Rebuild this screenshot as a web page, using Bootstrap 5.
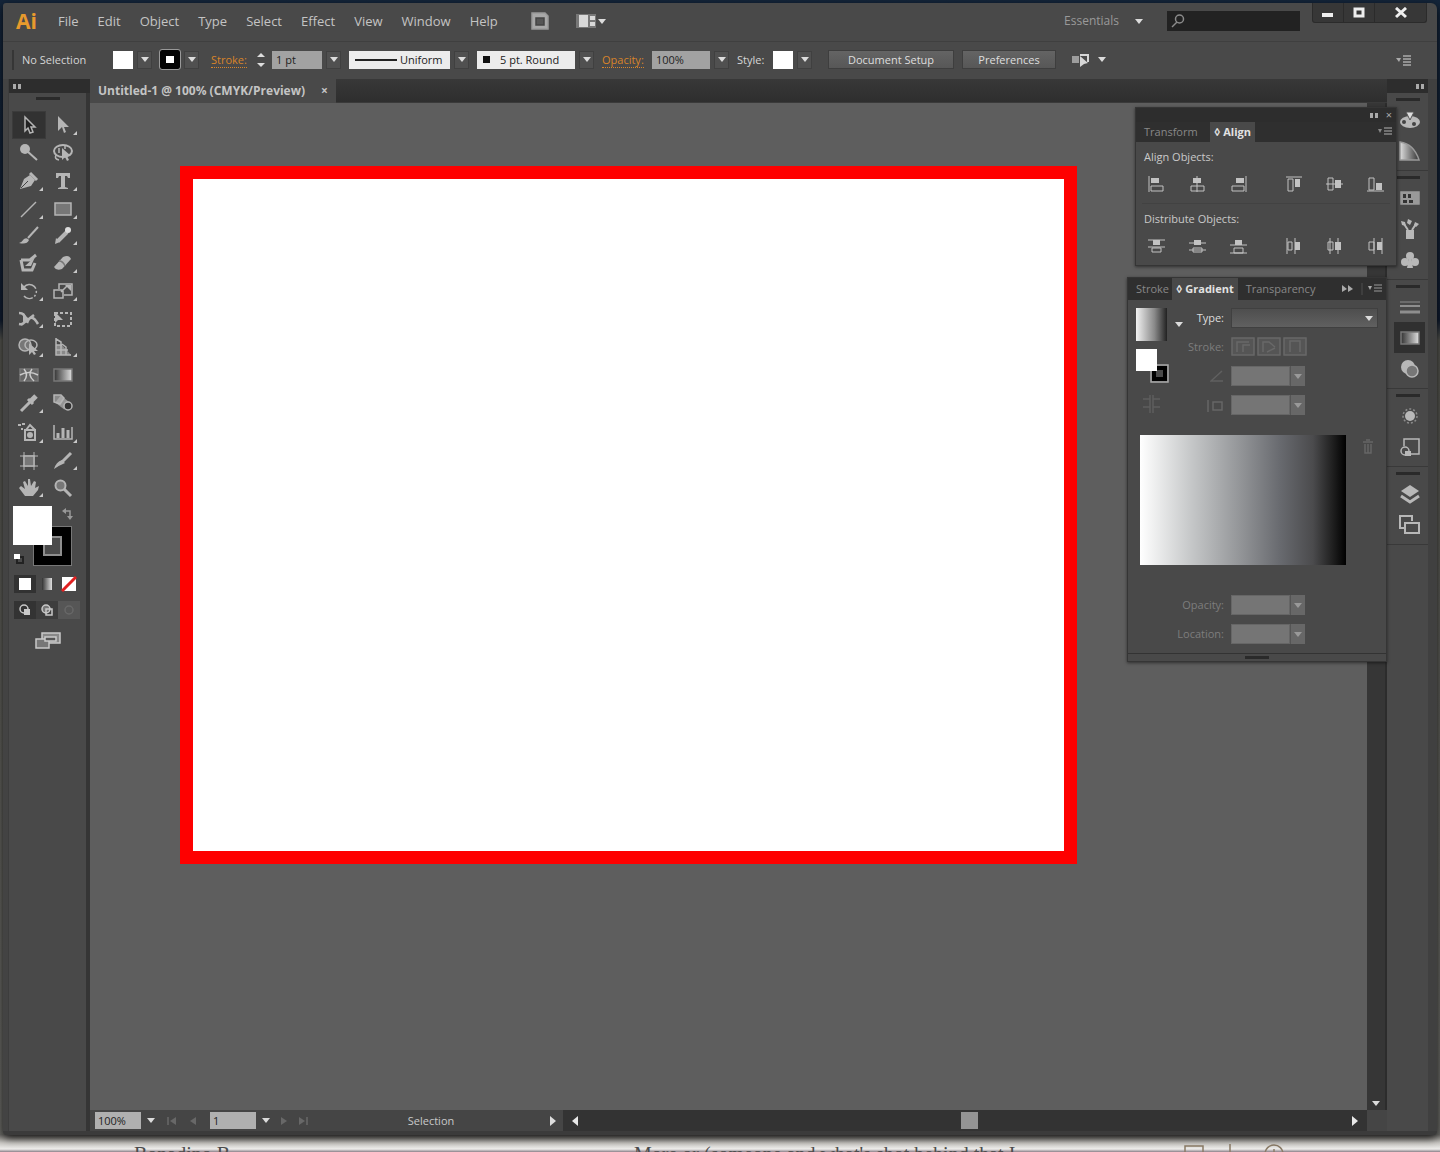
<!DOCTYPE html>
<html lang="en">
<head>
<meta charset="utf-8">
<meta name="viewport" content="width=device-width, initial-scale=1">
<title>Untitled-1 @ 100% (CMYK/Preview)</title>
<link rel="stylesheet" href="https://cdn.jsdelivr.net/npm/bootstrap@5.3.0/dist/css/bootstrap.min.css">
<style>
:root{--face:#494949;--dark:#313131;--line:#3a3a3a;--ink:#c9c9c9;--orange:#d8842a}
body{font-family:"Open Sans","Noto Sans",sans-serif;font-size:11px;line-height:14px;color:var(--ink);background:linear-gradient(#14253a,#101c30 320px,#55554f 340px,#6a6a66);overflow:hidden}
button,input,select{font:inherit;color:inherit;border:0;border-radius:0;padding:0;background:none;display:block}
select{appearance:none}
svg{display:block;fill:none;stroke:currentColor;stroke-width:1.5}
svg .s{fill:currentColor;stroke:none}
a{color:inherit;text-decoration:none}
.shell{height:100vh;padding:3px 3px 0}
.app{background:var(--face);border-radius:3px 6px 6px 6px;box-shadow:0 3px 8px rgba(0,0,0,.8);z-index:1}
.menubar{height:39px;border-bottom:1px solid #3f3f3f;font-size:13px;line-height:18px;padding:0 0 2px 13px;color:#c4c4c4}
.logo{font:bold 21px/24px "Open Sans",sans-serif;color:#e79a2d;width:42px}
.menus{gap:19px}
.essentials{font-size:12px;color:#999}
.finder{background:#222;width:133px;height:20px;padding-left:3px}
.finder input{width:108px;outline:0}
.winbtns{height:20px;background:#373737;border:1px solid #2b2b2b;border-top:0;border-radius:0 0 3px 3px;color:#eee;margin-right:10px}
.winbtns button{width:31px;display:grid;place-items:center;border-right:1px solid #2b2b2b}
.winbtns button:last-child{width:51px;border:0}
.heavy{stroke-width:3}
.ctrl{height:37px;padding:0 0 2px 9px;color:#d6d6d6}
.ctrl>*{flex:none}
.grip-v{width:2px;height:20px;background:#363636}
.fld{background:#a2a2a2;color:#222;height:18px;padding:0 4px;outline:0}
.caret-btn{width:15px;height:18px;display:grid;place-items:center;border:1px solid #404040;background:#505050}
.caret-btn::after,.tri::after{content:"";border:4px solid transparent;border-top:5px solid #dcdcdc;border-bottom:0}
.pick{background:#ececec;color:#222;height:18px}
.olink{color:var(--orange);border-bottom:1px dotted var(--orange);line-height:12px}
.sw{background:#fff;width:20px;height:18px}
.sw-stroke{width:20px;height:19px;border:6px solid #050505;outline:1px solid #999;background:#fff;border-radius:2px}
.pushb{height:19px;background:linear-gradient(#646464,#575757);border:1px solid #3e3e3e;color:#dedede}
.edge-l{width:5px;background:#434343}
.tools{width:82px;border-left:1px solid #3d3d3d;border-right:4px solid #353535;background:var(--face)}
.cap{height:14px;background:#2d2d2d;color:#aaa}
.tools .cap{width:82px}
.ticks{width:8px;height:5px;border:solid #aaa;border-width:0 3px}
.grip-h{width:24px;height:3px;background:#2a2a2a}
.griprow{height:18px;padding-top:4px}
.toolgrid{display:grid;grid-template-columns:34px 34px;grid-template-rows:28px 28px 28px 28px 26px 28px 28px 27px 29px 28px 28px 30px 27px 27px;padding-left:3px;color:#b5b5b5}
.toolgrid button{display:grid;place-items:center;position:relative}
.toolgrid .more::after{content:"";position:absolute;right:3px;bottom:4px;border:2px solid #c8c8c8;border-left-color:transparent;border-top-color:transparent}
.toolgrid .on{background:#323232;box-shadow:inset 0 0 0 1px #3b3b3b}
.paint{height:74px;position:relative}
.paint>*{position:absolute}
.fillbox{left:4px;top:5px;width:39px;height:39px;background:#fff;z-index:1}
.strokebox{left:25px;top:26px;width:37px;height:38px;border:9px solid #000;outline:1px solid #777;background:#4b4b4b;box-shadow:inset 0 0 0 2px #8e8e8e}
.swap{left:52px;top:6px}.deflt{left:4px;top:51px}
.modes{padding-left:5px}
.modes button{width:22px;height:18px;display:grid;place-items:center}
.tabs{height:24px;background:linear-gradient(#383838,#2e2e2e);border-bottom:1px solid #3a3a3a}
.doctab{height:24px;background:var(--face);padding:0 8px;font-size:12px;font-weight:700;line-height:16px;color:#c4c4c4}
.stage{background:#5e5e5e;padding:63px 0 0 90px}
.artboard{width:897px;height:698px;border:13px solid #fe0000;background:#fff}
.vscroll{width:20px;background:#363636;border-right:2px solid #2c2c2c}
.status{height:21px;background:#454545;padding-left:5px}
.status .fld{height:17px;background:#b0b0b0;padding:0 3px}
.status .tri{width:11px;display:grid;place-items:center}
.mode-name{width:222px;text-align:center;padding-right:10px}
.hbar{background:#333;height:21px;color:#e8e8e8}
.thumb{width:17px;height:17px;background:#949494}
.dock{width:41px;background:var(--face)}
.dockgrp{padding:5px 0 4px;border-bottom:1px solid #393939;color:#b8b8b8}
.dockgrp .grip-h{margin:0 0 3px 9px}
.dockgrp button{width:31px;height:31px;margin-left:7px;display:grid;place-items:center}
.dockgrp .on{background:#303030}
.edge-r{width:9px;background:#404040}
.base{height:4px;background:#3b3b3b;border-radius:0 0 6px 6px}
.floatp{position:absolute;background:var(--face);border:1px solid #353535;box-shadow:0 1px 3px rgba(0,0,0,.5);z-index:3}
.alignp{top:28px;right:40px;width:262px}
.gradp{top:198px;right:50px;width:260px}
.ptabs{background:#2f2f2f;height:20px;color:#888}
.ptabs .tab-on{background:var(--face);color:#e2e2e2;font-weight:700;height:100%}
.gradp .ptabs{height:22px}
.abtns{padding:0 12px;height:24px;color:#c2c2c2;margin:8px 0 7px}
.abtns svg{stroke-width:1}
.hr-soft{height:1px;background:#424242;margin:0 6px}
.gswatch{width:31px;height:33px;background:linear-gradient(90deg,#f2f2f2,#888 60%,#222)}
.ramp{width:206px;height:130px;background:linear-gradient(90deg,#fff,#c5c7c8 25%,#909295 50%,#686a6f 68%,#4b4b4d 84%,#222 93%,#000)}
.ramprow{padding:11px 0 0 12px}
.stopfields{padding:30px 0 0 8px}
.frow{height:29px}
.frow label{width:88px;text-align:right;margin-right:7px;color:#7d7d7d;line-height:20px}
.dimf{width:59px;height:20px;background:#757575;outline:0;border:1px solid #666}
.dimb{width:15px;height:20px;background:#676767;display:grid;place-items:center;border-left:1px solid #555}
.dimb::after{content:"";border:4px solid transparent;border-top:5px solid #999;border-bottom:0}
.typesel{width:147px;height:20px;background:linear-gradient(#4e4e4e,#606060);border:1px solid #404040}
.pfoot{height:8px;border-top:1px solid #333}
.behind{height:17px;background:linear-gradient(#6d6b68,#c9c7c3 8px,#eeedeb 14px,#8b8088 17px);margin:0 -3px;overflow:hidden;font:20px/20px "Liberation Serif",serif;color:#4c4c4c;padding:9px 0 0 134px}
</style>
<script src="https://cdn.jsdelivr.net/npm/bootstrap@5.3.0/dist/js/bootstrap.bundle.min.js"></script>
</head>
<body>
<div class="shell d-flex flex-column">
<div class="app d-flex flex-column flex-grow-1 position-relative">

<header class="menubar d-flex align-items-center flex-shrink-0">
  <span class="logo">Ai</span>
  <nav class="menus d-flex">
    <a href="#">File</a><a href="#">Edit</a><a href="#">Object</a><a href="#">Type</a><a href="#">Select</a><a href="#">Effect</a><a href="#">View</a><a href="#">Window</a><a href="#">Help</a>
  </nav>
  <button class="ms-4 ps-2" aria-label="Bridge"><svg width="20" height="20"><path d="M2 2h13l3 3v13H2z" fill="#a8a8a8" stroke="#999"/><path d="M6 7h8v7H6z" fill="#555" stroke="#444"/></svg></button>
  <button class="ms-4 d-flex align-items-center tri" aria-label="Arrange documents"><svg width="24" height="18"><path d="M2 2h20v14H2z" fill="#777" stroke="none"/><path d="M5 3h9v12H5zM16 4h5v4h-5zM16 10h5v4h-5z" fill="#d8d8d8" stroke="none"/></svg></button>
  <button class="essentials ms-auto d-flex align-items-center gap-3 tri">Essentials</button>
  <label class="finder d-flex align-items-center ms-4 me-2" aria-label="Search"><svg width="16" height="16" color="#8b8b8b"><circle cx="9.500" cy="6" r="4"/><path d="M7 9l-5 5"/></svg><input type="text" aria-label="Search help"></label>
  <div class="winbtns d-flex align-self-start ms-1">
    <button aria-label="Minimize"><svg width="12" height="12"><path d="M0 6h11v4H0z" class="s"/></svg></button>
    <button aria-label="Maximize"><svg class="heavy" width="12" height="12"><path d="M2 2h8v7H2z"/></svg></button>
    <button aria-label="Close"><svg class="heavy" width="12" height="12"><path d="M1 1l10 9M11 1L1 10"/></svg></button>
  </div>
</header>

<div class="ctrl d-flex align-items-center flex-shrink-0">
  <span class="grip-v"></span>
  <span style="width:95px" class="ps-2">No Selection</span>
  <button class="sw ms-1 me-1" aria-label="Fill"></button><button class="caret-btn" aria-label="Fill options"></button>
  <button class="sw-stroke ms-2 me-1" aria-label="Stroke colour"></button><button class="caret-btn" aria-label="Stroke options"></button>
  <label for="wt" class="ms-2 ps-1" style="width:47px"><span class="olink">Stroke:</span></label>
  <svg width="14" height="20" color="#ddd" class="me-1"><path class="s" d="M3 7l4-4 4 4zM3 13l4 4 4-4z"/></svg>
  <input id="wt" class="fld me-1" style="width:50px" value="1 pt"><button class="caret-btn" aria-label="Weights"></button>
  <label class="d-flex align-items-center pick ms-2" style="width:101px;padding-left:6px"><svg width="42" height="4"><path d="M0 2h42" stroke="#222" stroke-width="2"/></svg><select style="width:50px;margin-left:3px" aria-label="Width profile"><option>Uniform</option></select></label><button class="caret-btn ms-1" aria-label="Profiles"></button>
  <label class="d-flex align-items-center pick ms-2" style="width:98px;padding-left:6px"><svg width="7" height="7"><path d="M0 0h7v7H0z" style="fill:#111;stroke:none"/></svg><select style="width:72px;margin-left:10px" aria-label="Brush"><option>5 pt. Round</option></select></label><button class="caret-btn ms-1" aria-label="Brushes"></button>
  <label for="op" class="ms-2" style="width:50px"><span class="olink">Opacity:</span></label>
  <input id="op" class="fld" style="width:58px" value="100%"><button class="caret-btn ms-1" aria-label="Opacity values"></button>
  <span class="ms-2" style="width:36px">Style:</span>
  <button class="sw" aria-label="Graphic style"></button><button class="caret-btn ms-1" aria-label="Styles"></button>
  <button class="pushb ms-3" style="width:126px">Document Setup</button>
  <button class="pushb ms-2" style="width:94px">Preferences</button>
  <button class="ms-3 d-flex align-items-center gap-2 tri" aria-label="Select similar"><svg width="18" height="18"><path class="s" d="M0 5h7v7H0z" opacity=".6"/><path d="M8 4h8v7" stroke-width="2"/><path class="s" d="M8 5l8 7-4 1-4 3z"/></svg></button>
  <button class="ms-auto me-4" aria-label="Panel menu"><svg width="17" height="12" color="#aaa"><path class="s" d="M0 4h5l-2 4z"/><path d="M7 2h8M7 5h8M7 8h8M7 11h8"/></svg></button>
</div>

<main class="d-flex flex-grow-1 position-relative">
  <div class="edge-l"></div>
  <aside class="tools">
    <div class="cap d-flex align-items-center ps-1"><span class="ticks"></span></div>
    <div class="griprow d-flex justify-content-center"><span class="grip-h"></span></div>
    <div class="toolgrid">
      <button class="on" aria-label="Selection"><svg width="20" height="20"><path d="M6 2v14l3-3 2 5 3-1-2-5h4z" fill="#222"/></svg></button>
      <button class="more" aria-label="Direct selection"><svg width="20" height="20"><path class="s" d="M5 1v15l4-4 2 6 2-1-2-5h5z"/></svg></button>
      <button aria-label="Magic wand"><svg width="20" height="20"><circle class="s" cx="6" cy="6" r="5"/><path d="M8 8l10 9" stroke-width="2"/></svg></button>
      <button aria-label="Lasso"><svg width="22" height="20"><ellipse cx="11" cy="8" rx="9" ry="6" stroke-width="2"/><path d="M4 12q-2 4 3 5M7 5v5M13 2v4" /><path class="s" d="M10 5v12l3-3 2 4 2-1-2-4h4z"/></svg></button>
      <button class="more" aria-label="Pen"><svg width="20" height="20"><path class="s" d="M1 18L5 8l6-4 5 5-4 6z"/><path d="M11 2l7 7" stroke-width="3"/><path d="M2 17l7-7" stroke="#444" stroke-width="1"/></svg></button>
      <button class="more" aria-label="Type"><svg width="20" height="20"><path class="s" d="M3 2h14v5h-2l-1-2h-2v11l3 1v1H5v-1l3-1V5H6L5 7H3z"/></svg></button>
      <button class="more" aria-label="Line"><svg width="20" height="20"><path d="M2 18L17 3"/></svg></button>
      <button class="more" aria-label="Rectangle"><svg width="20" height="20"><path d="M2 4h16v12H2z" fill="#777"/></svg></button>
      <button aria-label="Paintbrush"><svg width="20" height="20"><path d="M19 1L9 12" stroke-width="2"/><path class="s" d="M0 17q3-1 5-4 3-2 5 1-2 5-10 3z"/></svg></button>
      <button class="more" aria-label="Pencil"><svg width="20" height="20"><path d="M5 15l9-9" stroke-width="4"/><path class="s" d="M2 18l1-6 4 4z"/><circle cx="15" cy="4" r="3" style="fill:#ddd;stroke:none"/></svg></button>
      <button aria-label="Blob brush"><svg width="20" height="20"><path d="M2 7h9l6-5M2 7l2 10h9l3-7" stroke-width="3"/><path class="s" d="M6 13l10-9-4 9z"/></svg></button>
      <button class="more" aria-label="Eraser"><svg width="20" height="20"><path class="s" d="M1 14l9-10q6-3 8 2l-9 10q-6 2-8-2z"/><path d="M6 8q4 0 6 5" stroke="#777"/></svg></button>
      <button class="more" aria-label="Rotate"><svg width="20" height="20"><path d="M5 6a7 7 0 1 1 0 9" stroke-dasharray="14 2 2 2 2 2"/><path class="s" d="M2 2v7h7z"/></svg></button>
      <button class="more" aria-label="Scale"><svg width="22" height="20"><path d="M2 9h9v8H2zM7 8V3h13v11h-8M9 11l6-6" /><path class="s" d="M13 4h6v6z"/></svg></button>
      <button class="more" aria-label="Width"><svg width="22" height="20"><path d="M1 4q6 0 6 6t-6 5M3 16L16 6M9 14q4-11 11 1" stroke-width="2.500"/><path class="s" d="M5 4l6 6-6 3z"/></svg></button>
      <button aria-label="Free transform"><svg width="20" height="20"><path d="M2 4h16v13H2z" stroke-dasharray="3 2" stroke-width="2"/><path class="s" d="M2 3v11l3-3h5z"/></svg></button>
      <button class="more" aria-label="Shape builder"><svg width="22" height="20"><circle cx="7" cy="8" r="6" fill="#777"/><ellipse cx="13" cy="8" rx="6" ry="5"/><path class="s" d="M11 6v12l3-3 2 3 2-1-2-3h4z"/></svg></button>
      <button class="more" aria-label="Perspective grid"><svg width="20" height="20"><path d="M3 1v17h15M3 2l5 3v13M9 7l4 3v8M3 8h6M3 13h12" /><path class="s" d="M3 8h6l9 10H3z" opacity=".6"/></svg></button>
      <button aria-label="Mesh"><svg width="22" height="20"><path d="M2 4h18v12H2z" fill="#666" stroke="#777"/><path d="M6 4q5 6 0 12M14 4q-5 6 2 12M2 10q9-5 18 0" stroke="#ccc"/></svg></button>
      <button aria-label="Gradient"><svg width="20" height="20"><defs><linearGradient id="tg"><stop offset="0" stop-color="#333"/><stop offset="1" stop-color="#e0e0e0"/></linearGradient></defs><path d="M1 4h18v12H1z" fill="url(#tg)" stroke="#777"/></svg></button>
      <button class="more" aria-label="Eyedropper"><svg width="20" height="20"><path d="M2 18l9-9" stroke-width="3"/><path d="M9 6l5 5" stroke-width="3"/><path d="M12 8l5-5" stroke-width="5"/></svg></button>
      <button aria-label="Blend"><svg width="22" height="20"><path d="M2 2h7l3 3-4 6-6-2z" fill="#888"/><path d="M6 6l9 7" stroke-width="9" opacity=".7"/><circle cx="16" cy="13" r="4" fill="#333"/></svg></button>
      <button class="more" aria-label="Symbol sprayer"><svg width="22" height="20"><path d="M7 8h10v10H7zM8 8l4-5 5 5" stroke-width="2"/><path d="M0 3h3M4 2h3M3 7h2" stroke-width="2"/><circle class="s" cx="12" cy="13" r="3"/></svg></button>
      <button class="more" aria-label="Column graph"><svg width="22" height="20"><path d="M2 3v14h18V5"/><path d="M6 16v-5M11 16V6M16 16V8" stroke-width="3"/></svg></button>
      <button aria-label="Artboard"><svg width="20" height="20"><path d="M5 1v18M15 1v18M1 5h18M1 15h18" stroke-width="1"/><path d="M5 5h10v10H5z" fill="#777"/></svg></button>
      <button class="more" aria-label="Slice"><svg width="20" height="20"><path class="s" d="M1 18q2-7 8-9l3 3q-5 2-11 6z"/><path d="M9 11l9-9" stroke-width="3"/></svg></button>
      <button class="more" aria-label="Hand"><svg width="20" height="20"><path class="s" d="M6 18L0 10l2-2 4 3-2-7 2-1 3 5V1h2l1 7 3-5 2 1-1 6 4-2-1 4-5 6z"/></svg></button>
      <button aria-label="Zoom"><svg width="20" height="20"><circle cx="7.500" cy="7.500" r="5" stroke-width="2" fill="#777"/><path d="M11 11l7 7" stroke-width="3"/></svg></button>
    </div>
    <div class="paint">
      <button class="fillbox" aria-label="Fill colour"></button>
      <button class="strokebox" aria-label="Stroke paint"></button>
      <button class="swap" aria-label="Swap fill and stroke"><svg width="14" height="14" color="#999"><path d="M4 4h5v6"/><path class="s" d="M1 4l4-3v6zM6 9h6l-3 4z"/></svg></button>
      <button class="deflt" aria-label="Default colours"><svg width="14" height="14"><path d="M4 5h6v6H4z" stroke="#222" stroke-width="2"/><path d="M1 2h6v5H1z" style="fill:#fff;stroke:none"/></svg></button>
    </div>
    <div class="modes d-flex">
      <button aria-label="Color" style="background:#323232"><svg width="14" height="14"><path d="M1 1h12v12H1z" style="fill:#fff;stroke:none"/></svg></button>
      <button aria-label="Gradient paint"><svg width="10" height="14"><path d="M0 1h10v12H0z" fill="url(#tg)" stroke="none"/></svg></button>
      <button aria-label="None"><svg width="16" height="16"><path d="M1 1h14v14H1z" style="fill:#fff;stroke:none"/><path d="M1 15L15 1" stroke="#e02020" stroke-width="3"/></svg></button>
    </div>
    <div class="modes d-flex pt-2">
      <button aria-label="Draw normal" style="background:#333"><svg width="16" height="14"><circle cx="7" cy="6" r="4"/><path class="s" d="M7 6h6v6H7z"/></svg></button>
      <button aria-label="Draw behind" style="background:#3d3d3d"><svg width="16" height="14"><circle cx="7" cy="6" r="4" fill="#777"/><path d="M7 6h6v6H7z"/></svg></button>
      <button aria-label="Draw inside" style="background:#565656"><svg width="16" height="14" color="#686868"><circle cx="8" cy="7" r="4"/></svg></button>
    </div>
    <button class="mx-auto mt-2 pt-1" aria-label="Screen mode"><svg width="28" height="20"><path d="M8 2h18v10H8z" fill="#888"/><path d="M2 8h13v9H2z" fill="#777"/><path d="M11 6h11v4H11z" fill="#555"/></svg></button>
  </aside>

  <section class="d-flex flex-column flex-grow-1">
    <div class="tabs d-flex"><div class="doctab d-flex align-items-center gap-3">Untitled-1 @ 100% (CMYK/Preview)<button aria-label="Close document">×</button></div></div>
    <div class="d-flex flex-grow-1">
      <div class="stage flex-grow-1"><div class="artboard"></div></div>
      <div class="vscroll d-flex flex-column justify-content-end align-items-center tri pb-1"></div>
    </div>
    <div class="status d-flex align-items-center">
      <input class="fld" style="width:46px" value="100%" aria-label="Zoom level"><button class="tri ms-1" aria-label="Zoom values"></button>
      <svg width="46" height="10" color="#686868" class="ms-2"><path d="M4 1v8"/><path class="s" d="M12 1v8L6 5zM32 1v8l-6-4z"/></svg>
      <input class="fld" style="width:46px" value="1" aria-label="Artboard number"><button class="tri ms-1" aria-label="Artboards"></button>
      <svg width="46" height="10" color="#686868" class="ms-2"><path d="M28 1v8"/><path class="s" d="M2 1v8l6-4zM20 1v8l6-4z"/></svg>
      <span class="mode-name">Selection</span>
      <svg width="12" height="10" class="me-1" color="#ddd"><path class="s" d="M3 0v10l6-5z"/></svg>
      <div class="hbar d-flex align-items-center flex-grow-1 px-2">
        <svg width="7" height="10"><path class="s" d="M7 0v10L1 5z"/></svg>
        <span class="flex-grow-1"></span><span class="thumb"></span><span style="width:374px"></span>
        <svg width="7" height="10"><path class="s" d="M0 0v10l6-5z"/></svg>
      </div>
      <span style="width:20px"></span>
    </div>
  </section>

  <aside class="dock">
    <div class="cap d-flex align-items-center justify-content-end pe-1"><span class="ticks"></span></div>
    <div class="dockgrp"><div class="grip-h"></div>
      <button aria-label="Color"><svg width="24" height="20"><ellipse cx="12" cy="12" rx="10" ry="6" class="s"/><circle cx="6" cy="12" r="2" fill="#444" stroke="none"/><circle cx="16" cy="14" r="2" fill="#444" stroke="none"/><path d="M8 2l4 8 4-8z" fill="#ddd" stroke="#555" stroke-width="1"/></svg></button>
      <button aria-label="Color guide"><svg width="22" height="20"><defs><linearGradient id="cg"><stop offset="0" stop-color="#ddd"/><stop offset="1" stop-color="#333"/></linearGradient></defs><path d="M1 1q14 2 19 18H1z" fill="url(#cg)" stroke="#999"/></svg></button></div>
    <div class="dockgrp"><div class="grip-h"></div>
      <button aria-label="Swatches"><svg width="20" height="16"><path d="M1 2h18v12H1z" fill="#999" stroke="#999"/><path d="M3 4h3v4H3zM8 4h3v4H8zM3 10h4v3H3zM9 10h4v3H9z" style="fill:#333;stroke:none"/></svg></button>
      <button aria-label="Brushes"><svg width="20" height="22"><path class="s" d="M6 12h8v9H6z"/><path d="M8 12L4 6M12 12l4-6" stroke-width="2"/><path class="s" d="M1 3l4 1 1 4-4-1zM8 1l4 2-2 4-3-2zM15 4l4 2-3 3-2-2z"/></svg></button>
      <button aria-label="Symbols"><svg width="20" height="20"><circle class="s" cx="10" cy="6" r="4"/><circle class="s" cx="5" cy="12" r="4"/><circle class="s" cx="15" cy="12" r="4"/><path class="s" d="M9 8h2l2 10H7z"/></svg></button></div>
    <div class="dockgrp"><div class="grip-h"></div>
      <button aria-label="Stroke"><svg width="20" height="16" color="#8e8e8e"><path d="M0 3h20" stroke-width="1"/><path d="M0 7h20" stroke-width="2"/><path d="M0 13h20" stroke-width="3"/></svg></button>
      <button class="on" aria-label="Gradient panel"><svg width="20" height="14"><path d="M1 1h18v12H1z" fill="url(#tg)" stroke="#777"/></svg></button>
      <button aria-label="Transparency"><svg width="22" height="22"><circle class="s" cx="9" cy="9" r="7"/><circle cx="13" cy="13" r="6" fill="#777"/></svg></button></div>
    <div class="dockgrp"><div class="grip-h"></div>
      <button aria-label="Appearance"><svg width="20" height="20"><circle cx="10" cy="10" r="7" stroke-dasharray="2 2" opacity=".6"/><circle class="s" cx="10" cy="10" r="5"/></svg></button>
      <button aria-label="Graphic styles"><svg width="22" height="20"><path d="M5 9V2h15v15h-8"/><circle cx="6" cy="14" r="4"/><path class="s" d="M6 14h6v5H6z"/></svg></button></div>
    <div class="dockgrp"><div class="grip-h"></div>
      <button aria-label="Layers"><svg width="20" height="20"><path class="s" d="M10 1l9 6-9 6-9-6z"/><path d="M1 12l9 6 9-6" stroke-width="3"/></svg></button>
      <button aria-label="Artboards"><svg width="22" height="22"><path d="M5 14H1V2h12v5M6 9h14v10H6z" stroke-width="2"/></svg></button></div>
  </aside>
  <div class="edge-r"></div>

  <section class="floatp alignp">
    <div class="cap d-flex align-items-center justify-content-end gap-2 pe-1"><span class="ticks"></span><span>×</span></div>
    <div class="ptabs d-flex align-items-center"><a href="#" class="px-2" style="width:74px">Transform</a><a href="#" class="tab-on px-1 d-flex align-items-center">◊ Align</a>
      <svg width="14" height="10" class="ms-auto me-1" color="#888"><path class="s" d="M0 2h4l-2 4z"/><path d="M6 1h8M6 4h8M6 7h8"/></svg></div>
    <div class="px-2 pt-2">Align Objects:</div>
    <div class="abtns d-flex align-items-center">
      <div class="d-flex gap-4"><button aria-label="Align left"><svg width="17" height="18"><path d="M1 1v16M3 11h12v5H3z"/><path class="s" d="M3 3h8v5H3z"/></svg></button>
      <button aria-label="Align centre"><svg width="17" height="18"><path d="M8 1v16M2 11h13v5H2z"/><path class="s" d="M4 3h8v5H4z"/></svg></button>
      <button aria-label="Align right"><svg width="17" height="18"><path d="M16 1v16M2 11h12v5H2z"/><path class="s" d="M6 3h8v5H6z"/></svg></button></div>
      <div class="d-flex gap-4 ms-auto"><button aria-label="Align top"><svg width="17" height="18"><path d="M1 2h16M3 4h5v12H3z"/><path class="s" d="M10 4h5v8h-5z"/></svg></button>
      <button aria-label="Align middle"><svg width="17" height="18"><path d="M0 9h17M2 3h5v12H2z"/><path class="s" d="M9 5h6v8H9z"/></svg></button>
      <button aria-label="Align bottom"><svg width="17" height="18"><path d="M0 16h17M2 3h5v12H2z"/><path class="s" d="M9 8h6v7H9z"/></svg></button></div>
    </div>
    <div class="hr-soft"></div>
    <div class="px-2 pt-2">Distribute Objects:</div>
    <div class="abtns d-flex align-items-center">
      <div class="d-flex gap-4"><button aria-label="Distribute top"><svg width="17" height="18"><path d="M0 3h17M0 10h17M4 11h9v4H4z"/><path class="s" d="M5 3h7v5H5z"/></svg></button>
      <button aria-label="Distribute vertical centre"><svg width="17" height="18"><path d="M0 6h17M0 13h17M4 11h9v4H4z"/><path class="s" d="M5 3h7v5H5z"/></svg></button>
      <button aria-label="Distribute bottom"><svg width="17" height="18"><path d="M0 8h17M0 16h17M4 11h9v5H4z"/><path class="s" d="M5 3h7v5H5z"/></svg></button></div>
      <div class="d-flex gap-4 ms-auto"><button aria-label="Distribute left"><svg width="17" height="18"><path d="M2 1v16M10 1v16M3 5h4v8H3z"/><path class="s" d="M10 5h5v8h-5z"/></svg></button>
      <button aria-label="Distribute horizontal centre"><svg width="17" height="18"><path d="M4 1v16M12 1v16M2 5h5v8H2z"/><path class="s" d="M9 5h6v8H9z"/></svg></button>
      <button aria-label="Distribute right"><svg width="17" height="18"><path d="M7 1v16M15 1v16M2 5h5v8H2z"/><path class="s" d="M10 5h5v8h-5z"/></svg></button></div>
    </div>
  </section>

  <section class="floatp gradp">
    <div class="ptabs d-flex align-items-center"><a href="#" class="ps-2" style="width:44px">Stroke</a><a href="#" class="tab-on px-1 d-flex align-items-center">◊ Gradient</a><a href="#" class="px-2">Transparency</a>
      <svg width="48" height="12" class="ms-auto" color="#aaa"><path class="s" d="M4 2v7l5-3zM10 2v7l5-3z"/><path d="M24 0v12" stroke="#444"/><path class="s" d="M30 3h4l-2 4z" /><path d="M36 2h8M36 5h8M36 8h8" stroke="#777"/></svg></div>
    <div class="d-flex position-relative pt-2 ps-2">
      <div class="position-absolute">
        <div class="d-flex align-items-center gap-2 tri"><div class="gswatch"></div></div>
        <svg width="36" height="36" class="mt-2"><path d="M15 16h17v17H15z" stroke="#aaa"/><path d="M18 19h11v11H18z" stroke="#000" stroke-width="4"/><path d="M0 0h21v22H0z" style="fill:#fff;stroke:none"/></svg>
        <svg width="24" height="22" color="#5e5e5e" class="mt-2 ms-1"><path d="M10 2v18M13 2v18M3 6h7M13 6h7M3 14h7M13 14h7"/></svg>
      </div>
      <div>
        <div class="frow d-flex"><label for="gt" style="color:#ddd">Type:</label><div class="typesel d-flex align-items-center justify-content-end tri pe-1"><select id="gt" class="flex-grow-1" style="height:18px"><option></option></select></div></div>
        <div class="frow d-flex"><label>Stroke:</label><svg width="76" height="20" color="#686868"><path d="M1 1h22v17H1zM27 1h22v17H27zM53 1h22v17H53z" fill="#555"/><path d="M6 15V5h12M12 15V8h7M32 15V5h6l6 5M36 15l8-4M59 15V4h10v11"/></svg></div>
        <div class="frow d-flex"><label for="ga" aria-label="Angle"><svg width="14" height="12" class="ms-auto mt-1" color="#606060"><path d="M12 1L1 11h12"/></svg></label><input id="ga" class="dimf"><button class="dimb" aria-label="Angles"></button></div>
        <div class="frow d-flex"><label for="gr" aria-label="Aspect ratio"><svg width="18" height="14" class="ms-auto mt-1" color="#666"><path d="M2 1v12M7 3h9v8H7z"/></svg></label><input id="gr" class="dimf"><button class="dimb" aria-label="Ratios"></button></div>
      </div>
    </div>
    <div class="ramprow d-flex"><button class="ramp" aria-label="Gradient ramp"></button><button class="align-self-start ms-3 mt-1" aria-label="Delete stop"><svg width="12" height="16" color="#666"><path d="M1 3h10M3 5v9h6V5M6 5v9M4 1h4"/></svg></button></div>
    <div class="stopfields">
      <div class="frow d-flex"><label for="go">Opacity:</label><input id="go" class="dimf"><button class="dimb" aria-label="Opacities"></button></div>
      <div class="frow d-flex"><label for="gl">Location:</label><input id="gl" class="dimf"><button class="dimb" aria-label="Locations"></button></div>
    </div>
    <div class="pfoot d-flex justify-content-center align-items-center"><span class="grip-h"></span></div>
  </section>
</main>
<div class="base flex-shrink-0"></div>
</div>

<div class="behind d-flex flex-shrink-0">
  <span style="width:500px">Bonadino B</span><span style="width:550px">More or (someone and what's shot behind that I</span>
  <svg width="110" height="20" color="#8a7b66"><path d="M1 2h18v12H1zM46 0v12"/><circle cx="90" cy="10" r="9"/><path d="M90 5v8"/></svg>
</div>
</div>
</body>
</html>
